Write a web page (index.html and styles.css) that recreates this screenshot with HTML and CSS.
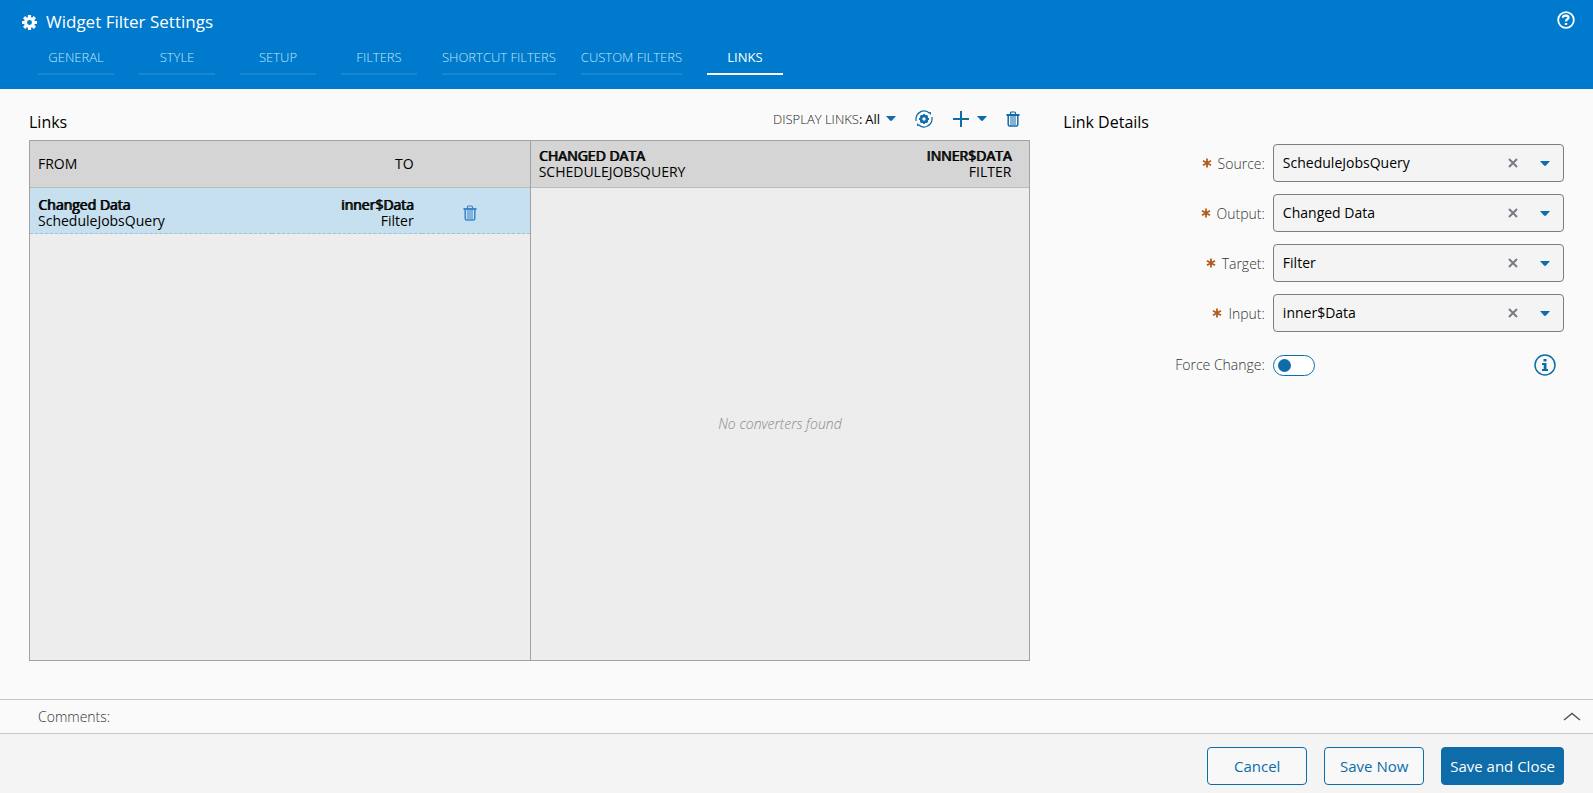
FILE: index.html
```html
<!DOCTYPE html>
<html lang="en">
<head>
<meta charset="utf-8">
<meta name="viewport" content="width=device-width, initial-scale=1">
<title>Widget Filter Settings</title>
<link rel="stylesheet" href="styles.css">
</head>
<body>
<svg class="defs" aria-hidden="true">
  <symbol id="trash" viewBox="0 0 14 16">
    <path d="M4.500 3V2q0-1 1-1h3q1 0 1 1v1" fill="none" stroke="currentColor" stroke-width="1.200"/>
    <path d="M.5 3h13v2H.5z" fill="currentColor"/>
    <path d="M2.200 5v8.500q0 1.500 1.500 1.500h6.600q1.500 0 1.500-1.500V5" fill="none" stroke="currentColor" stroke-width="1.500"/>
    <path d="M5 5v9M7 5v9M9 5v9" stroke="currentColor"/>
  </symbol>
  <symbol id="caret" viewBox="0 0 10 5"><path d="M0 0h10L6 4.500Q5 5.400 4 4.500z" fill="currentColor"/></symbol>
  <symbol id="cross" viewBox="0 0 10 10"><path d="M1 1l8 8M9 1l-8 8" stroke="currentColor" stroke-width="2"/></symbol>
  <symbol id="required" viewBox="0 0 10 10"><path d="M5 .5v9M1 2.700l8 4.600M9 2.700L1 7.300" stroke="currentColor" stroke-width="1.800"/></symbol>
</svg>

<header class="header">
  <div class="title-row">
    <svg class="gear" viewBox="0 0 14 14" aria-hidden="true">
      <g stroke="currentColor" stroke-width="3"><path d="M7 0v3M7 11v3M0 7h3M11 7h3M2 2l2 2M10 10l2 2M12 2l-2 2M2 12l2-2"/></g>
      <circle cx="7" cy="7" r="3.700" fill="none" stroke="currentColor" stroke-width="2.800"/>
    </svg>
    <h1 class="title">Widget Filter Settings</h1>
    <button class="icon-btn help" type="button" aria-label="Help">
      <svg width="18" height="18" viewBox="0 0 18 18" fill="none" stroke="currentColor">
        <circle cx="9" cy="9" r="7.800" stroke-width="1.800"/>
        <path d="M6 6.800V5.600q1.200-1.200 3.200-1 2.400.2 2.300 2 0 1-1.200 1.600Q9 9 9 10.500" stroke-width="2.200"/>
        <path d="M7.800 12h2.400v2H7.800z" fill="currentColor" stroke="none"/>
      </svg>
    </button>
  </div>
  <nav class="tabs">
    <a class="tab" href="#general">GENERAL</a>
    <a class="tab" href="#style">STYLE</a>
    <a class="tab" href="#setup">SETUP</a>
    <a class="tab" href="#filters">FILTERS</a>
    <a class="tab" href="#shortcut">SHORTCUT FILTERS</a>
    <a class="tab" href="#custom">CUSTOM FILTERS</a>
    <a class="tab active" href="#links" aria-current="page">LINKS</a>
  </nav>
</header>

<main class="main">
  <section class="links">
    <div class="links-head">
      <h2 class="section-title">Links</h2>
      <div class="toolbar">
        <div class="display">
          <label class="display-label" for="display">DISPLAY LINKS</label><span>:</span>
          <select class="display-select" id="display"><option>All</option></select>
          <svg class="caret" aria-hidden="true"><use href="#caret"/></svg>
        </div>
        <button class="icon-btn" type="button" aria-label="Refresh links">
          <svg width="18" height="18" viewBox="0 0 18 18" fill="none" stroke="currentColor">
            <path d="M4 2.600A8 8 0 0 1 14.500 3.200M16.800 7A8 8 0 0 1 12 16.400M14 15.400A8 8 0 0 1 3.500 14.800M1.200 11A8 8 0 0 1 6 1.600" stroke-width="1.200"/>
            <path d="M13.500 2.500l2.500-.5v3zM4.500 15.500L2 16v-3z" fill="currentColor" stroke="none"/>
            <circle cx="9" cy="9" r="3" stroke-width="2.600"/>
            <path d="M9 4v2M9 12v2M4 9h2M12 9h2M5.500 5.500L7 7M11 11l1.500 1.500M12.500 5.500L11 7M5.500 12.500L7 11" stroke-width="1.800"/>
          </svg>
        </button>
        <button class="icon-btn add" type="button" aria-label="Add link">
          <svg width="18" height="18" viewBox="0 0 18 18"><path d="M9 1v16M1 9h16" stroke="currentColor" stroke-width="2"/></svg>
          <svg class="caret" aria-hidden="true"><use href="#caret"/></svg>
        </button>
        <button class="icon-btn" type="button" aria-label="Delete all links"><svg width="14" height="16"><use href="#trash"/></svg></button>
      </div>
    </div>
    <div class="panes">
      <div class="pane">
        <table class="table">
          <thead>
            <tr><th class="from" scope="col">FROM</th><th class="to" scope="col">TO</th><th class="action" aria-label="Actions"></th></tr>
          </thead>
          <tbody>
            <tr class="selected">
              <td class="from"><b class="strong">Changed Data</b>ScheduleJobsQuery</td>
              <td class="to"><b class="strong">inner$Data</b>Filter</td>
              <td class="action"><button class="icon-btn row-delete" type="button" aria-label="Delete link"><svg width="14" height="16"><use href="#trash"/></svg></button></td>
            </tr>
          </tbody>
        </table>
      </div>
      <div class="pane">
        <table class="table">
          <thead>
            <tr><th class="from" scope="col"><b class="strong">CHANGED DATA</b>SCHEDULEJOBSQUERY</th><th class="to inset" scope="col"><b class="strong">INNER$DATA</b>FILTER</th></tr>
          </thead>
        </table>
        <p class="empty">No converters found</p>
      </div>
    </div>
  </section>

  <section class="details">
    <h2 class="section-title">Link Details</h2>
    <form class="form">
      <label class="label" for="source"><svg class="req" role="img" aria-label="Required"><use href="#required"/></svg>Source:</label>
      <div class="combo">
        <select class="combo-select" id="source"><option>ScheduleJobsQuery</option></select>
        <button class="icon-btn clear" type="button" aria-label="Clear source"><svg width="10" height="10"><use href="#cross"/></svg></button>
        <svg class="caret" aria-hidden="true"><use href="#caret"/></svg>
      </div>
      <label class="label" for="output"><svg class="req" role="img" aria-label="Required"><use href="#required"/></svg>Output:</label>
      <div class="combo">
        <select class="combo-select" id="output"><option>Changed Data</option></select>
        <button class="icon-btn clear" type="button" aria-label="Clear output"><svg width="10" height="10"><use href="#cross"/></svg></button>
        <svg class="caret" aria-hidden="true"><use href="#caret"/></svg>
      </div>
      <label class="label" for="target"><svg class="req" role="img" aria-label="Required"><use href="#required"/></svg>Target:</label>
      <div class="combo">
        <select class="combo-select" id="target"><option>Filter</option></select>
        <button class="icon-btn clear" type="button" aria-label="Clear target"><svg width="10" height="10"><use href="#cross"/></svg></button>
        <svg class="caret" aria-hidden="true"><use href="#caret"/></svg>
      </div>
      <label class="label" for="input"><svg class="req" role="img" aria-label="Required"><use href="#required"/></svg>Input:</label>
      <div class="combo">
        <select class="combo-select" id="input"><option>inner$Data</option></select>
        <button class="icon-btn clear" type="button" aria-label="Clear input"><svg width="10" height="10"><use href="#cross"/></svg></button>
        <svg class="caret" aria-hidden="true"><use href="#caret"/></svg>
      </div>
      <label class="label" for="force">Force Change:</label>
      <div class="switch-row">
        <input class="switch" id="force" type="checkbox" role="switch">
        <button class="icon-btn" type="button" aria-label="About force change">
          <svg width="22" height="22" viewBox="0 0 22 22">
            <circle cx="11" cy="11" r="10" fill="none" stroke="currentColor" stroke-width="1.500"/>
            <path d="M9.500 5h3v2.500h-3zM8 9h4.500v6H14v2H8v-2h1.700v-4H8z" fill="currentColor"/>
          </svg>
        </button>
      </div>
    </form>
  </section>
</main>

<section class="comments">
  <span>Comments:</span>
  <button class="icon-btn expand" type="button" aria-label="Expand comments">
    <svg width="18" height="9" viewBox="0 0 18 9"><path d="M1 8l8-6.500L17 8" fill="none" stroke="currentColor" stroke-width="1.500"/></svg>
  </button>
</section>

<footer class="footer">
  <button class="btn" type="button">Cancel</button>
  <button class="btn" type="button">Save Now</button>
  <button class="btn primary" type="button">Save and Close</button>
</footer>
</body>
</html>
```
FILE: styles.css
```css
* { box-sizing: border-box; }

body {
  margin: 0;
  min-height: 100vh;
  display: flex;
  flex-direction: column;
  background: #fafafa;
  color: #000;
  font: 14px/16px "Open Sans", "Noto Sans", sans-serif;
}

button, select { font: inherit; }
select { appearance: none; border: 0; background: transparent; color: inherit; }

.defs { position: absolute; width: 0; height: 0; }

.icon-btn {
  display: flex;
  align-items: center;
  padding: 0;
  border: 0;
  background: none;
  color: #0e6ca8;
  cursor: pointer;
}

.caret { width: 10px; height: 5px; color: #0e6ca8; pointer-events: none; }

/* Header */
.header { height: 89px; background: #007acc; color: #fff; }
.title-row { display: flex; align-items: center; height: 44px; padding: 0 18px 0 22px; }
.gear { width: 15px; height: 15px; }
.title { margin: 0 auto 0 9px; font-size: 17px; font-weight: 400; line-height: 24px; }
.help { color: #fff; height: 40px; align-self: flex-start; }

.tabs { display: flex; gap: 25px; padding: 0 38px; }
.tab {
  min-width: 76px;
  height: 31px;
  padding-top: 5px;
  border-bottom: 2px solid #1a87d1;
  color: #c4e6f8;
  font-size: 13px;
  font-weight: 300;
  text-align: center;
  text-decoration: none;
  white-space: nowrap;
}
.tab.active { border-color: #fff; color: #fff; font-weight: 400; }

/* Main area */
.main {
  flex: 1;
  display: grid;
  grid-template-columns: 2fr 1fr;
  gap: 33px;
  padding: 17px 29px 38px;
}
.section-title { margin: 0; font-size: 16px; font-weight: 400; line-height: 32px; }

.links { display: flex; flex-direction: column; }
.links-head { display: flex; justify-content: space-between; height: 34px; }
.toolbar { display: flex; align-items: center; gap: 19px; height: 25px; padding-right: 10px; }
.display { display: flex; align-items: center; font-size: 13px; }
.display-label { color: #222; font-weight: 300; }
.display-select { width: 16px; margin: 0 5px 0 3px; padding: 0; }
.add { gap: 7px; }

.panes { flex: 1; display: grid; grid-template-columns: 1fr 1fr; border: 1px solid #a2a2a2; background: #ededed; }
.pane { display: flex; flex-direction: column; }
.pane + .pane { border-left: 1px solid #a2a2a2; }

.table { width: 100%; border-spacing: 0; table-layout: fixed; }
.table th, .table td { height: 47px; padding: 0 8px; text-align: left; font-weight: 400; }
.table th { background: #d5d5d5; border-bottom: 1px solid #bcbcbc; }
.table td { height: 46px; padding-top: 4px; border-bottom: 1px dashed #9fc3d4; }
.table .to { width: 30%; text-align: right; }
.table .to.inset { width: 50%; padding-right: 18px; }
.table .action { width: 108px; }
.selected { background: #c7e0f0; }
.strong { display: block; font-weight: 400; text-shadow: 1px 0 currentColor; }
.row-delete { margin-left: 33px; color: #3a86c8; }

.empty { margin: auto; color: #8a8a8a; font-style: italic; font-weight: 300; }

/* Link details */
.form {
  display: grid;
  grid-template-columns: 9fr 13fr;
  gap: 12px 8px;
  padding-top: 6px;
}
.label { display: flex; justify-content: flex-end; align-items: center; padding-top: 2px; color: #333; font-weight: 300; }
.req { width: 10px; height: 10px; margin: 0 6px 2px 0; color: #b35a1e; }

.combo {
  display: grid;
  grid-template-columns: 1fr 12px 10px;
  gap: 20px;
  align-items: center;
  height: 38px;
  padding-right: 13px;
  border: 1px solid #7d7d7d;
  border-radius: 4px;
  background: #f4f4f4;
}
.combo-select { height: 36px; padding: 0 0 0 9px; line-height: 22px; }
.clear { color: #767b85; }

.switch-row { display: flex; align-items: center; justify-content: space-between; height: 40px; padding: 2px 8px 0 0; }
.switch {
  appearance: none;
  display: flex;
  align-items: center;
  width: 42px;
  height: 21px;
  margin: 0;
  padding-left: 4px;
  border: 1px solid #0e6ca8;
  border-radius: 11px;
  background: #fff;
}
.switch::before { content: ""; width: 13px; height: 13px; border-radius: 50%; background: #0e6ca8; }
.switch:checked { justify-content: flex-end; padding: 0 4px 0 0; }

/* Bottom bars */
.comments {
  display: flex;
  align-items: center;
  justify-content: space-between;
  height: 35px;
  padding: 0 12px 0 38px;
  border: solid #c6c6c6;
  border-width: 1px 0;
  color: #333;
  font-weight: 300;
}
.expand { color: #555; }

.footer { display: flex; justify-content: flex-end; gap: 17px; padding: 13px 29px 8px; background: #f4f4f4; }
.btn {
  min-width: 100px;
  height: 38px;
  padding: 0 8px;
  border: 1px solid #0e6ca8;
  border-radius: 4px;
  background: #f8f8f8;
  color: #0e6ca8;
  font-size: 15px;
}
.btn.primary { background: #0e6ca8; color: #fff; }
```
